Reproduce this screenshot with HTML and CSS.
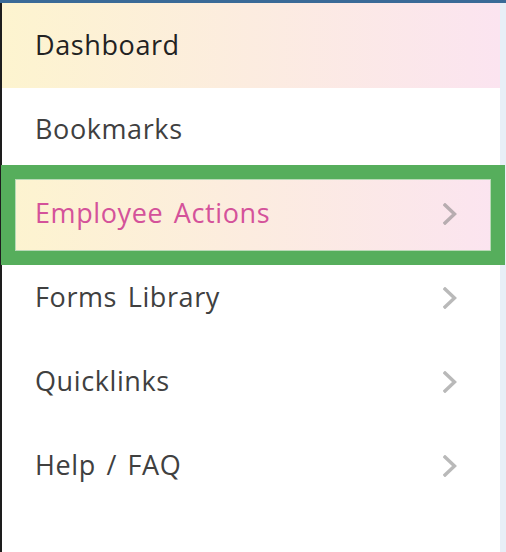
FILE: index.html
```html
<!DOCTYPE html>
<html lang="en">
<head>
  <meta charset="UTF-8">
  <meta name="viewport" content="width=device-width, initial-scale=1.0">
  <title>Menu</title>
  <link rel="stylesheet" href="styles.css">
</head>
<body>
  <div class="frame">
    <nav class="menu">
      <a class="item item-home" href="#">Dashboard</a>
      <a class="item" href="#">Bookmarks</a>
      <a class="item item-active" href="#">
        <span>Employee Actions</span>
        <svg class="chevron" width="14" height="22" viewBox="0 0 14 22"><polyline points="2,2 11.5,11 2,20"/></svg>
      </a>
      <a class="item" href="#">
        <span>Forms Library</span>
        <svg class="chevron" width="14" height="22" viewBox="0 0 14 22"><polyline points="2,2 11.5,11 2,20"/></svg>
      </a>
      <a class="item" href="#">
        <span>Quicklinks</span>
        <svg class="chevron" width="14" height="22" viewBox="0 0 14 22"><polyline points="2,2 11.5,11 2,20"/></svg>
      </a>
      <a class="item" href="#">
        <span>Help / FAQ</span>
        <svg class="chevron" width="14" height="22" viewBox="0 0 14 22"><polyline points="2,2 11.5,11 2,20"/></svg>
      </a>
    </nav>
    <div class="edge"></div>
  </div>
</body>
</html>
```

FILE: styles.css
```css
body {
  margin: 0;
  font-family: 'Open Sans', 'Noto Sans', sans-serif;
  background-color: #fff;
}
.frame {
  display: flex;
  height: 552px;
  box-sizing: border-box;
  border-top: 3px solid #3a6a97;
  overflow: hidden;
}
.menu {
  width: 498px;
  border-left: 2px solid #1d1d1d;
  background-color: #fff;
  display: flex;
  flex-direction: column;
}
.edge {
  flex: 1;
  background-color: #e8eff7;
}
.item {
  position: relative;
  display: flex;
  align-items: center;
  justify-content: space-between;
  height: 84px;
  box-sizing: border-box;
  padding: 0 43px 3px 33px;
  font-size: 27px;
  letter-spacing: 0.6px;
  word-spacing: 3px;
  color: #404040;
  text-decoration: none;
  flex-shrink: 0;
}
.item-home {
  height: 85px;
  color: #222;
  background: linear-gradient(to right, #fdf4cf, #fbe4f0);
}
.item-active {
  color: #d4529a;
  background: linear-gradient(to right, #fdf4cf, #fbe4f0);
}
.item-active::after {
  content: '';
  position: absolute;
  left: -1px;
  top: -7px;
  right: -5px;
  bottom: -9px;
  border: 14px solid #56ae5c;
  box-shadow: inset 0 0 0 1px #b9d9b6;
}
.chevron {
  fill: none;
  stroke: rgba(115, 115, 115, 0.5);
  stroke-width: 3.4;
  stroke-linecap: square;
  margin-top: 3px;
}
```
